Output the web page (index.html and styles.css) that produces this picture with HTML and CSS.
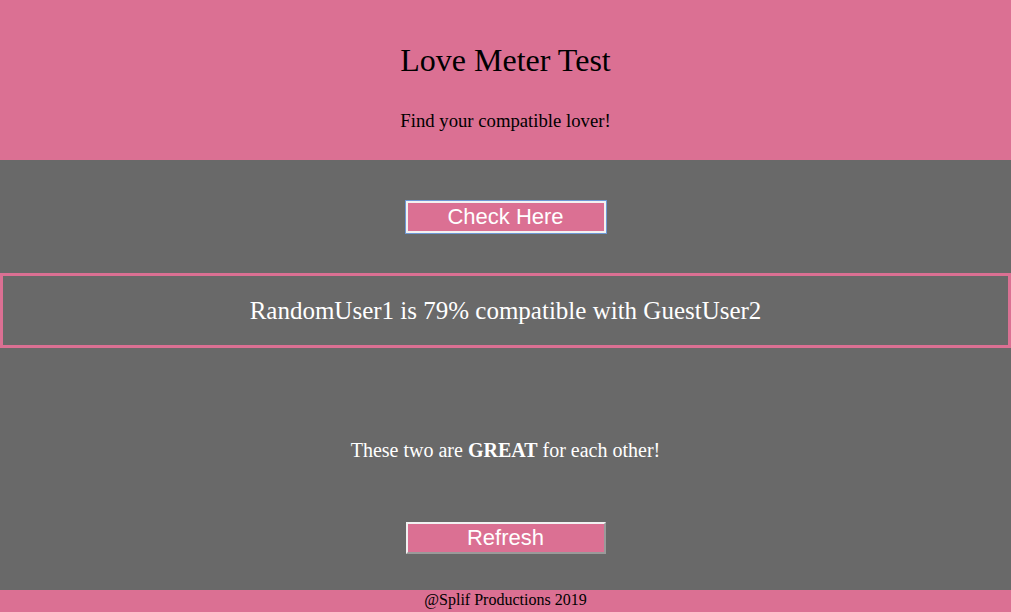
FILE: index.html
```html
<!DOCTYPE html>
<html>
<head>
<meta charset="utf-8">
<link rel="stylesheet" href="styles.css">
</head>
<body>
<header class="top">
  <h1 class="title">Love Meter Test</h1>
  <p class="subtitle">Find your compatible lover!</p>
</header>
<main class="main">
  <button class="btn btn-focus">Check Here</button>
  <div class="result">RandomUser1 is 79% compatible with GuestUser2</div>
  <p class="verdict">These two are <b>GREAT</b> for each other!</p>
  <button class="btn">Refresh</button>
</main>
<footer class="foot">@Splif Productions 2019</footer>
</body>
</html>
```
FILE: styles.css
```css
html, body {
  margin: 0;
  padding: 0;
  background: #696969;
  font-family: "Liberation Serif", "Times New Roman", serif;
}
.top {
  background: #db7093;
  height: 160px;
  display: flex;
  flex-direction: column;
  align-items: center;
  color: #000;
}
.title {
  margin: 42px 0 0;
  font-size: 32px;
  font-weight: normal;
  line-height: 36px;
}
.subtitle {
  margin: 32px 0 0;
  font-size: 18.72px;
  line-height: 22px;
}
.main {
  display: flex;
  flex-direction: column;
  align-items: center;
  padding-top: 41px;
  color: #fff;
}
.btn {
  width: 200px;
  height: 32px;
  box-sizing: border-box;
  background: #db7093;
  color: #fff;
  font-family: "Liberation Sans", Arial, sans-serif;
  font-size: 22px;
  line-height: 1;
  padding: 0;
  border: 2px solid;
  border-color: #f2f2f2 #9a9a9a #9a9a9a #f2f2f2;
}
.btn-focus {
  border-color: #f2f2f2;
  outline: 1px solid #6e98d6;
}
.result {
  align-self: stretch;
  margin-top: 40px;
  height: 69px;
  border: 3px solid #db7093;
  display: flex;
  align-items: center;
  justify-content: center;
  font-size: 25px;
}
.verdict {
  margin: 90px 0 0;
  font-size: 20px;
  line-height: 24px;
}
.verdict + .btn {
  margin-top: 60px;
}
.foot {
  margin-top: 36px;
  background: #db7093;
  height: 22px;
  text-align: center;
  font-size: 16px;
  line-height: 20px;
  color: #000;
}
```
